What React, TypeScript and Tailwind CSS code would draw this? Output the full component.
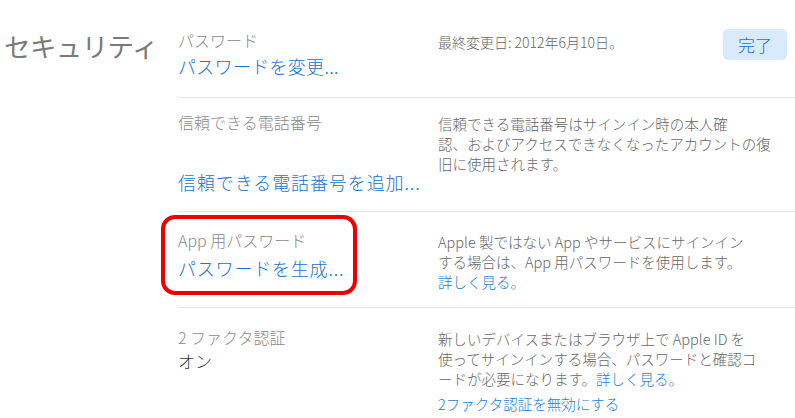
import React from "react";

const font = "font-['Noto_Sans_CJK_JP','Noto_Sans',sans-serif]";

const App: React.FC = () => {
  return (
    <div className={`w-[795px] h-[418px] bg-white overflow-hidden flex font-light ${font}`}>
      {/* 見出し */}
      <div className="w-[178px] shrink-0 pl-[4px] pt-[26px]">
        <h1 className="text-[26.5px] leading-[40px] text-[#7a7a7a] font-normal tracking-[-0.6px]">セキュリティ</h1>
      </div>

      <div className="flex-1 flex flex-col">
        {/* パスワード */}
        <div className="h-[98px] border-b border-[#e5e5e5] flex pt-[30px]">
          <div className="w-[260px] shrink-0">
            <p className="text-[16px] leading-[20px] text-[#8a8a8a]">パスワード</p>
            <a className="block mt-[4px] text-[18px] leading-[24px] text-[#1a73c9] tracking-[0.3px]">
              パスワードを変更...
            </a>
          </div>
          <div className="flex-1 flex justify-between items-start pr-[8px]">
            <p className="pt-[2px] text-[14px] leading-[20px] text-[#666]">最終変更日: 2012年6月10日。</p>
            <button className="-mt-[1px] w-[64px] h-[31px] rounded-[5px] bg-[#d9eafc] text-[17px] text-[#1a73c9]">
              完了
            </button>
          </div>
        </div>

        {/* 信頼できる電話番号 */}
        <div className="h-[114px] border-b border-[#e5e5e5] flex pt-[14px]">
          <div className="w-[260px] shrink-0">
            <p className="text-[16px] leading-[20px] text-[#8a8a8a]">信頼できる電話番号</p>
            <a className="block mt-[38px] text-[18px] leading-[24px] text-[#1a73c9] tracking-[0.9px]">
              信頼できる電話番号を追加...
            </a>
          </div>
          <p className="pt-[2px] text-[14.5px] leading-[20px] text-[#666] whitespace-nowrap">
            信頼できる電話番号はサインイン時の本人確
            <br />
            認、およびアクセスできなくなったアカウントの復
            <br />
            旧に使用されます。
          </p>
        </div>

        {/* App 用パスワード */}
        <div className="h-[96px] border-b border-[#e5e5e5] flex pt-[18px]">
          <div className="w-[260px] shrink-0 relative">
            <p className="text-[16px] leading-[20px] text-[#8a8a8a]">App 用パスワード</p>
            <a className="block mt-[6px] text-[18px] leading-[24px] text-[#1a73c9] tracking-[0.8px]">
              パスワードを生成...
            </a>
            <div className="absolute -left-[17px] -top-[15px] w-[196px] h-[80px] border-[4px] border-[#ee0000] rounded-[14px]" />
          </div>
          <p className="pt-[2px] text-[14.5px] leading-[20px] text-[#666] whitespace-nowrap">
            Apple 製ではない App やサービスにサインイン
            <br />
            する場合は、App 用パスワードを使用します。
            <br />
            <a className="text-[#1a82d4]">詳しく見る。</a>
          </p>
        </div>

        {/* 2 ファクタ認証 */}
        <div className="flex-1 flex pt-[19px]">
          <div className="w-[260px] shrink-0">
            <p className="text-[16px] leading-[20px] text-[#8a8a8a]">2 ファクタ認証</p>
            <p className="mt-[2px] text-[17px] leading-[24px] text-[#333]">オン</p>
          </div>
          <div className="pt-[2px]">
            <p className="text-[14.5px] leading-[20px] text-[#666] whitespace-nowrap">
              新しいデバイスまたはブラウザ上で Apple ID を
              <br />
              使ってサインインする場合、パスワードと確認コ
              <br />
              ードが必要になります。<a className="text-[#1a82d4]">詳しく見る。</a>
            </p>
            <a className="block mt-[5px] text-[14.5px] leading-[20px] text-[#1a82d4]">2ファクタ認証を無効にする</a>
          </div>
        </div>
      </div>
    </div>
  );
};

export default App;
